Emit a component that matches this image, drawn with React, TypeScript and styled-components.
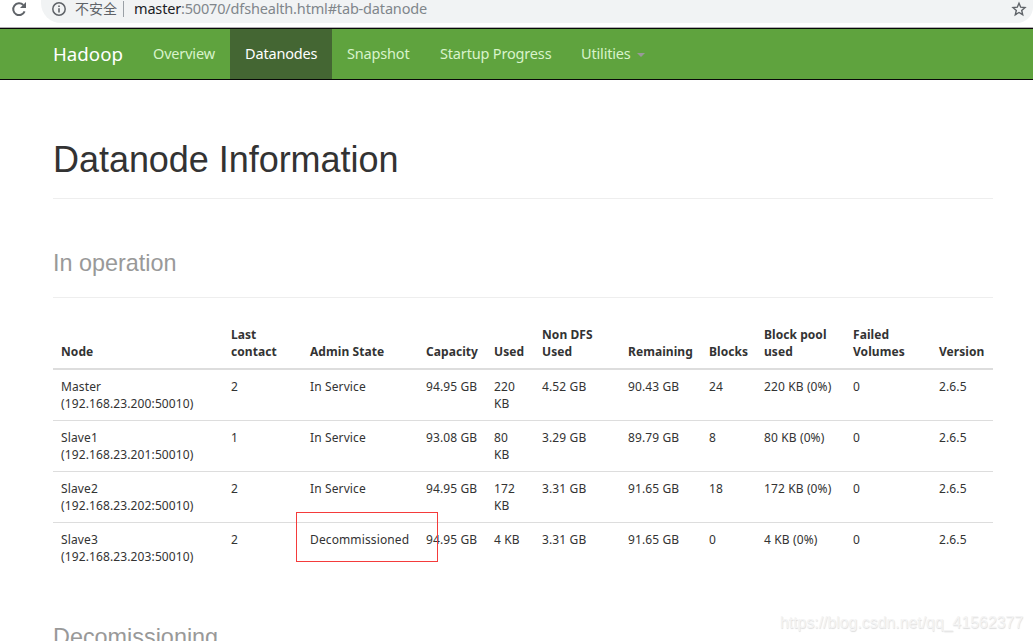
import React from "react";
import styled, { createGlobalStyle } from "styled-components";

const GlobalStyle = createGlobalStyle`
  *, *::before, *::after { box-sizing: border-box; }
  html, body { margin: 0; padding: 0; overflow: hidden; background: #fff; }
  body { font-family: "Noto Sans", "Noto Sans CJK SC", sans-serif; color: #333; }
`;

const Page = styled.div`
  position: relative;
  display: flex;
  flex-direction: column;
  width: 1033px;
  height: 641px;
  overflow: hidden;
  background: #fff;
`;

const BrowserBar = styled.div`
  display: flex;
  flex: none;
  height: 28px;
  padding: 0 0 4px 11px;
  border-bottom: 1px solid #b1adb1;
`;

const ReloadIcon = styled.svg`
  flex: none;
  width: 16px;
  height: 17px;
  margin-top: 1px;
`;

const AddressBar = styled.div`
  display: flex;
  align-items: flex-start;
  flex: 1;
  height: 23px;
  margin-left: 14px;
  padding-left: 10px;
  background: #f1f3f4;
  border-radius: 0 0 16px 20px;
`;

const InfoIcon = styled.svg`
  width: 16px;
  height: 17px;
  margin-top: 1px;
`;

const Insecure = styled.span`
  width: 42px;
  margin-left: 8px;
  font: 14px/16px "Noto Sans CJK SC", sans-serif;
  color: #5f6368;
  white-space: nowrap;
`;

const Separator = styled.span`
  width: 1px;
  height: 16px;
  margin: 1px 10px 0 6px;
  background: #9aa0a6;
`;

const Url = styled.span`
  flex: 1;
  font-size: 14.5px;
  line-height: 17px;
  letter-spacing: -0.17px;
  white-space: nowrap;
  color: #80868b;
`;

const Host = styled.span`
  color: #202124;
`;

const StarIcon = styled.svg`
  width: 16px;
  height: 16px;
  margin: 1px 6px 0 0;
`;

const Navbar = styled.nav`
  display: flex;
  flex: none;
  height: 52px;
  padding-left: 38px;
  background: #5fa33e;
  border-top: 1px solid #080808;
  border-bottom: 1px solid #080808;
`;

const Brand = styled.a`
  width: 100px;
  padding: 15px 0 0 15px;
  font-size: 18.7px;
  line-height: 20px;
  color: #fff;
`;

const NavItem = styled.a<{ $width: number; $active?: boolean }>`
  display: flex;
  width: ${(p) => p.$width}px;
  padding: 14px 0 0 15px;
  font-size: 14.5px;
  line-height: 20px;
  letter-spacing: -0.17px;
  white-space: nowrap;
  color: ${(p) => (p.$active ? "#fff" : "#d8f3cb")};
  background: ${(p) => (p.$active ? "#446633" : "transparent")};
`;

const Caret = styled.span`
  width: 8px;
  height: 4px;
  margin: 10px 0 0 6px;
  border: 4px solid transparent;
  border-top-color: #999;
  border-bottom: 0;
`;

const Container = styled.main`
  width: 940px;
  margin-left: 53px;
`;

const PageHeader = styled.header<{ $top: number; $height: number }>`
  height: ${(p) => p.$height}px;
  padding-top: ${(p) => p.$top}px;
  border-bottom: 1px solid #eee;
`;

const Title = styled.h1`
  margin: 0;
  font: 400 36px/40px "Liberation Sans", Arial, sans-serif;
  letter-spacing: -0.04px;
  white-space: nowrap;
`;

const SectionTitle = styled.h2`
  margin: 0;
  font: 400 23.4px/28px "Liberation Sans", Arial, sans-serif;
  color: #999;
  white-space: nowrap;
`;

const Table = styled.table`
  width: 940px;
  margin-top: 20px;
  table-layout: fixed;
  border-collapse: separate;
  border-spacing: 0;
  font-size: 12px;
  line-height: 17px;
`;

const HeadCell = styled.th`
  height: 52px;
  padding: 8px 0 8px 8px;
  border-bottom: 2px solid #ddd;
  text-align: left;
  vertical-align: bottom;
  font-weight: 700;
  letter-spacing: 0.06px;
  white-space: pre;
`;

const Cell = styled.td`
  height: 50px;
  padding: 8px 0 8px 8px;
  vertical-align: top;
  letter-spacing: 0.12px;
  white-space: pre;

  tr + tr > & {
    height: 51px;
    border-top: 1px solid #ddd;
  }
`;

const Highlight = styled.div`
  position: absolute;
  left: 296px;
  top: 512px;
  width: 142px;
  height: 50px;
  border: 1px solid #f43b3b;
`;

const Watermark = styled.div`
  position: absolute;
  left: 780px;
  top: 613px;
  font: 16px/20px "Liberation Sans", Arial, sans-serif;
  letter-spacing: -0.07px;
  color: #f4f4f4;
  text-shadow: 0.5px 0.5px 1px #dcdcdc;
  white-space: nowrap;
`;

const columns: [string, number][] = [
  ["Node", 170],
  ["Last\ncontact", 79],
  ["Admin State", 116],
  ["Capacity", 68],
  ["Used", 48],
  ["Non DFS\nUsed", 86],
  ["Remaining", 81],
  ["Blocks", 55],
  ["Block pool\nused", 89],
  ["Failed\nVolumes", 86],
  ["Version", 62],
];

const nodes = [
  ["Master\n(192.168.23.200:50010)", "2", "In Service", "94.95 GB", "220\nKB", "4.52 GB", "90.43 GB", "24", "220 KB (0%)", "0", "2.6.5"],
  ["Slave1\n(192.168.23.201:50010)", "1", "In Service", "93.08 GB", "80\nKB", "3.29 GB", "89.79 GB", "8", "80 KB (0%)", "0", "2.6.5"],
  ["Slave2\n(192.168.23.202:50010)", "2", "In Service", "94.95 GB", "172\nKB", "3.31 GB", "91.65 GB", "18", "172 KB (0%)", "0", "2.6.5"],
  ["Slave3\n(192.168.23.203:50010)", "2", "Decommissioned", "94.95 GB", "4 KB", "3.31 GB", "91.65 GB", "0", "4 KB (0%)", "0", "2.6.5"],
];

export default function App() {
  return (
    <Page>
      <GlobalStyle />
      <BrowserBar>
        <ReloadIcon viewBox="0 0 16 17" fill="none">
          <path d="M13.6 10.4A5.9 5.9 0 1 1 12.3 4" stroke="#5f6368" strokeWidth="2" />
          <path d="M15 1V7H9Z" fill="#5f6368" />
        </ReloadIcon>
        <AddressBar>
          <InfoIcon viewBox="0 0 16 17" fill="none">
            <circle cx="8" cy="8" r="6.2" stroke="#5f6368" strokeWidth="1.5" />
            <path d="M8 7.2V11.5M8 4.5V6" stroke="#5f6368" strokeWidth="1.6" />
          </InfoIcon>
          <Insecure>不安全</Insecure>
          <Separator />
          <Url>
            <Host>master</Host>:50070/dfshealth.html#tab-datanode
          </Url>
          <StarIcon viewBox="0 0 16 16" fill="none">
            <path
              d="M8 2.2 9.7 6.2 14 6.6 10.7 9.5 11.7 13.7 8 11.5 4.3 13.7 5.3 9.5 2 6.6 6.3 6.2Z"
              stroke="#5f6368"
              strokeWidth="1.4"
            />
          </StarIcon>
        </AddressBar>
      </BrowserBar>
      <Navbar>
        <Brand>Hadoop</Brand>
        <NavItem $width={92}>Overview</NavItem>
        <NavItem $width={102} $active>Datanodes</NavItem>
        <NavItem $width={93}>Snapshot</NavItem>
        <NavItem $width={141}>Startup Progress</NavItem>
        <NavItem $width={94}>
          Utilities
          <Caret />
        </NavItem>
      </Navbar>
      <Container>
        <PageHeader $top={60} $height={119}>
          <Title>Datanode Information</Title>
        </PageHeader>
        <PageHeader $top={50} $height={99}>
          <SectionTitle>In operation</SectionTitle>
        </PageHeader>
        <Table>
          <colgroup>
            {columns.map(([label, width]) => (
              <col key={label} width={width} />
            ))}
          </colgroup>
          <thead>
            <tr>
              {columns.map(([label]) => (
                <HeadCell key={label}>{label}</HeadCell>
              ))}
            </tr>
          </thead>
          <tbody>
            {nodes.map((row) => (
              <tr key={row[0]}>
                {row.map((value, i) => (
                  <Cell key={i}>{value}</Cell>
                ))}
              </tr>
            ))}
          </tbody>
        </Table>
        <PageHeader $top={50} $height={99}>
          <SectionTitle>Decomissioning</SectionTitle>
        </PageHeader>
      </Container>
      <Highlight />
      <Watermark>https://blog.csdn.net/qq_41562377</Watermark>
    </Page>
  );
}
